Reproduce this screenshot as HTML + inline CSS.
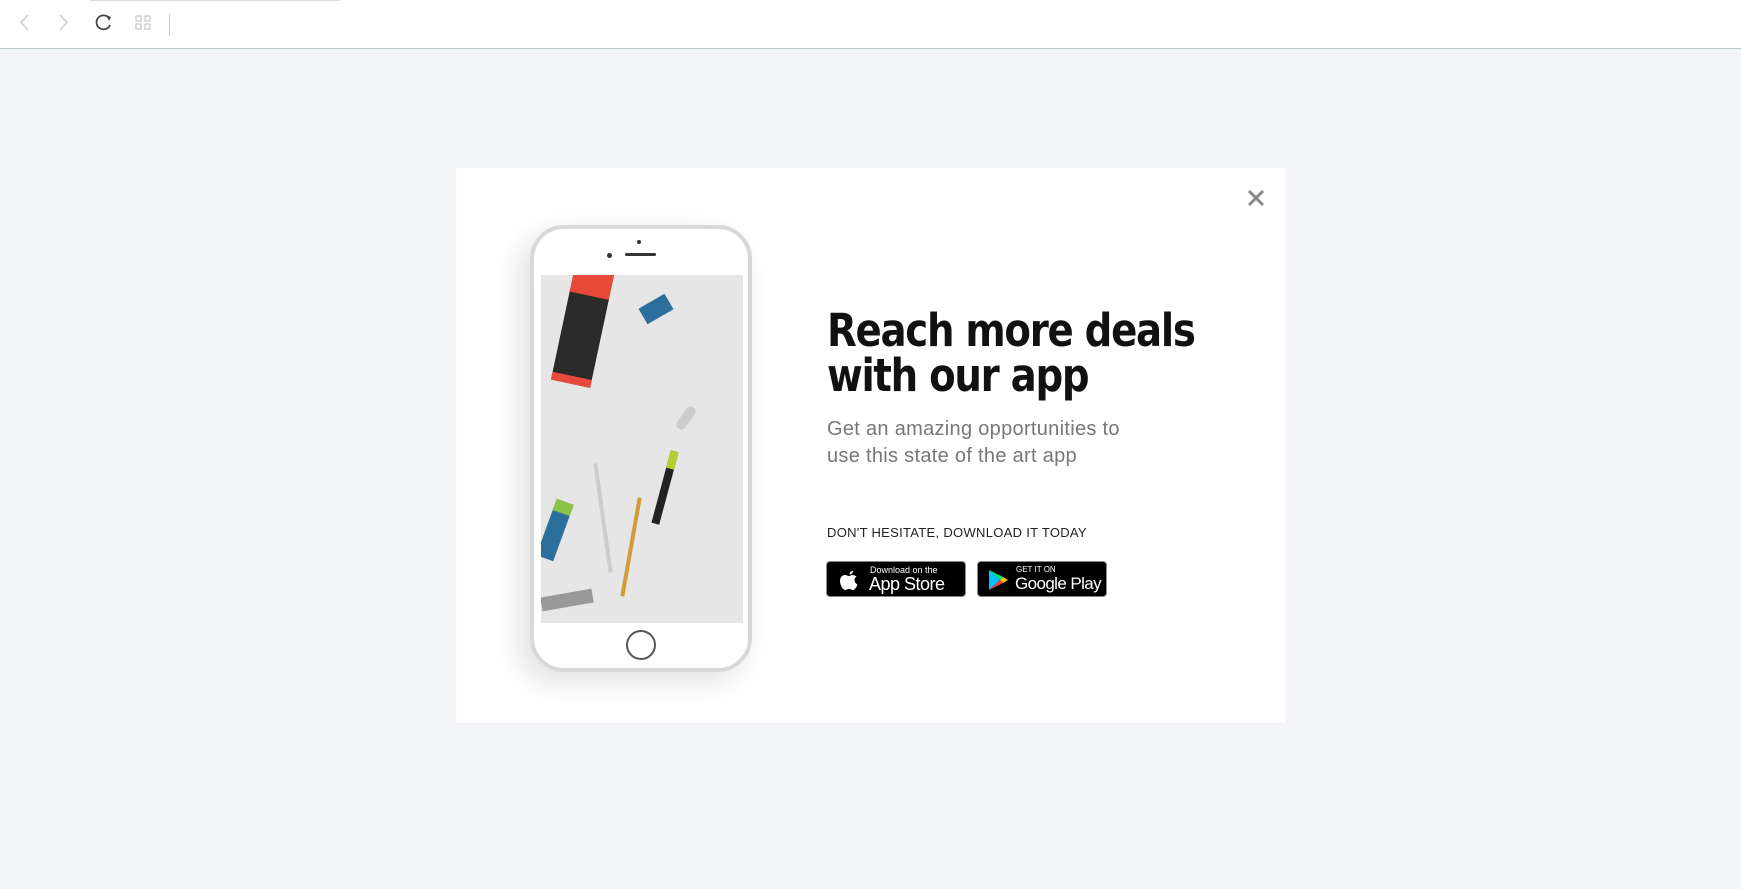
<!DOCTYPE html>
<html><head><meta charset="utf-8"><style>
*{margin:0;padding:0;box-sizing:border-box}
body{width:1741px;height:889px;background:#f4f5f8;font-family:"Liberation Sans",sans-serif;position:relative;overflow:hidden}
.tb{position:absolute;left:0;top:0;width:1741px;height:49px;background:#fff;border-bottom:1px solid #b8c4cc}
.modal{position:absolute;left:456px;top:168px;width:829px;height:555px;background:#fff}
.abs{position:absolute}
h1{position:absolute;left:371px;top:140px;font-size:45px;line-height:45px;font-weight:600;color:#111;font-family:"DejaVu Sans","Liberation Sans",sans-serif;letter-spacing:-1.5px;transform:scaleX(0.86);transform-origin:left;white-space:nowrap}
.sub{position:absolute;left:371px;top:248px;font-size:20px;line-height:27px;color:#777;font-weight:300;letter-spacing:.3px}
.cta{position:absolute;left:371px;top:357px;font-size:13px;color:#222;letter-spacing:.3px}
.btn{position:absolute;top:393px;height:36px;background:#000;border-radius:4px;border:1px solid #888;color:#fff}
</style></head><body>
<div class="tb">
<div class="abs" style="left:90px;top:0;width:250px;height:1px;background:#ddd"></div>
<svg class="abs" style="left:0;top:0" width="200" height="49">
<path d="M28 15 L21 22.5 L28 30" fill="none" stroke="#ccc" stroke-width="1.5"/>
<path d="M60 15 L67 22.5 L60 30" fill="none" stroke="#ccc" stroke-width="1.5"/>
<path d="M109 18 A7 7 0 1 0 110 25" fill="none" stroke="#444" stroke-width="1.8"/>
<path d="M106 15 L111 17 L109 21 Z" fill="#444"/>
<rect x="136" y="16" width="5" height="5" fill="none" stroke="#bbb"/><rect x="145" y="16" width="5" height="5" fill="none" stroke="#bbb"/>
<rect x="136" y="24" width="5" height="5" fill="none" stroke="#bbb"/><rect x="145" y="24" width="5" height="5" fill="none" stroke="#bbb"/>
<line x1="169.5" y1="14" x2="169.5" y2="36" stroke="#ccc"/>
</svg>
</div>
<div class="modal">
<svg class="abs" style="left:791px;top:21px" width="18" height="18"><path d="M2 2L16 16M16 2L2 16" stroke="#888" stroke-width="3"/></svg>
<div class="abs" style="left:74px;top:57px;width:222px;height:447px;border:4px solid #d8d8d8;border-radius:34px;background:#fff;box-shadow:-10px 10px 30px rgba(0,0,0,.12)"></div>
<div class="abs" style="left:85px;top:107px;width:202px;height:348px;background:#e6e6e6;overflow:hidden">
 <div class="abs" style="left:22px;top:-10px;width:40px;height:120px;background:#2a2a2a;transform:rotate(12deg);border-top:30px solid #e84a3a;border-bottom:8px solid #e84a3a"></div>
 <div class="abs" style="left:100px;top:25px;width:30px;height:18px;background:#2c6e9c;transform:rotate(-30deg)"></div>
 <div class="abs" style="left:140px;top:130px;width:10px;height:26px;background:#ccc;border-radius:5px;transform:rotate(35deg)"></div>
 <div class="abs" style="left:120px;top:175px;width:8px;height:75px;background:#222;transform:rotate(15deg);border-top:18px solid #b5cf2a"></div>
 <div class="abs" style="left:60px;top:188px;width:4px;height:110px;background:#ccc;transform:rotate(-8deg)"></div>
 <div class="abs" style="left:88px;top:222px;width:4px;height:100px;background:#d39a3a;transform:rotate(10deg)"></div>
 <div class="abs" style="left:5px;top:225px;width:18px;height:60px;background:#2c6e9c;transform:rotate(20deg);border-top:12px solid #8bc34a"></div>
 <div class="abs" style="left:0;top:318px;width:52px;height:14px;background:#999;transform:rotate(-10deg)"></div>
</div>
<div class="abs" style="left:181px;top:72px;width:4px;height:4px;border-radius:2px;background:#333"></div>
<div class="abs" style="left:151px;top:85px;width:5px;height:5px;border-radius:3px;background:#333"></div>
<div class="abs" style="left:169px;top:85px;width:31px;height:3px;background:#333;border-radius:2px"></div>
<div class="abs" style="left:170px;top:462px;width:30px;height:30px;border:2px solid #555;border-radius:50%"></div>
<h1>Reach more deals<br>with our app</h1>
<div class="sub">Get an amazing opportunities to<br>use this state of the art app</div>
<div class="cta">DON'T HESITATE, DOWNLOAD IT TODAY</div>
<div class="btn" style="left:370px;width:140px">
 <svg class="abs" style="left:12px;top:6px" width="20" height="24"><path d="M14 3c-2 0-3.5 1.5-3.5 3.5 2 0 3.5-1.5 3.5-3.5zM10 8c-1.5 0-2.5-1-4-1-2.5 0-5 2-5 6 0 4 3 9 5 9 1.5 0 2-1 4-1s2.5 1 4 1c2 0 4-4 4.5-5.5-2-1-3-2.5-3-4.5 0-2 1.5-3 2-3.5C16 7.5 14.5 7 13.5 7 12 7 11 8 10 8z" fill="#fff"/></svg>
 <div class="abs" style="left:43px;top:3px;font-size:9px">Download on the</div>
 <div class="abs" style="left:42px;top:12px;font-size:18px;letter-spacing:-.5px">App Store</div>
</div>
<div class="btn" style="left:521px;width:130px">
 <svg class="abs" style="left:8px;top:6px" width="24" height="24"><path d="M3 2L14 12L3 22Z" fill="#00c3ff"/><path d="M3 2L17 9L14 12Z" fill="#00e676"/><path d="M3 22L17 15L14 12Z" fill="#ff3a44"/><path d="M17 9L22 12L17 15L14 12Z" fill="#ffc400"/></svg>
 <div class="abs" style="left:38px;top:3px;font-size:8px">GET IT ON</div>
 <div class="abs" style="left:37px;top:12px;font-size:17px;letter-spacing:-.6px">Google Play</div>
</div>
</div>
</body></html>
